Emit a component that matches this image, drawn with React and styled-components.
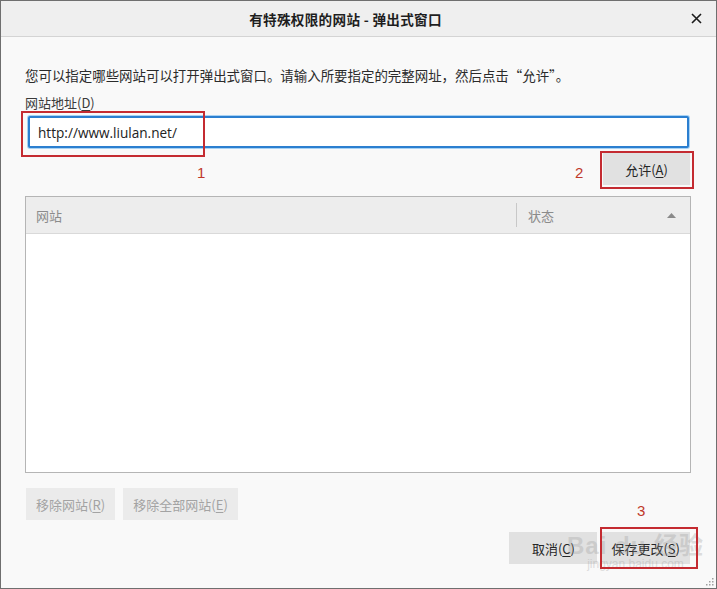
import React from "react"
import styled, { createGlobalStyle } from "styled-components"

const GlobalStyle = createGlobalStyle`
  html, body {
    margin: 0;
    padding: 0;
    background: #ffffff;
  }
  body {
    font-family: "Noto Sans CJK SC", "Open Sans", sans-serif;
  }
`

const Window = styled.div`
  position: relative;
  width: 717px;
  height: 589px;
  box-sizing: border-box;
  border: 1px solid #6f6f6f;
  display: flex;
  flex-direction: column;
  background: #f9f9f9;
  overflow: hidden;
`

const TitleBar = styled.div`
  height: 35px;
  flex-shrink: 0;
  display: flex;
  align-items: center;
  justify-content: center;
  padding-right: 26px;
  background: #efefef;
  border-bottom: 1px solid #d4d4d4;
  position: relative;
`

const Title = styled.div`
  font-size: 13.6px;
  font-weight: 700;
  color: #1e1e1e;
  letter-spacing: 0.3px;
`

const CloseButton = styled.div`
  position: absolute;
  right: 14px;
  top: 12px;
  width: 11px;
  height: 11px;
  display: flex;
`

const Body = styled.div`
  position: relative;
  flex: 1;
  display: flex;
  flex-direction: column;
  padding: 28px 25px 0 24px;
  color: #2b2b2b;
  font-size: 13px;
`

const Description = styled.p`
  margin: 0;
  line-height: 20px;
  font-size: 13.45px;
`

const Label = styled.div`
  margin-top: 8px;
  line-height: 20px;
  color: #3a3a3a;
`

const Key = styled.span`
  text-decoration: underline;
  text-underline-offset: 2px;
`

const UrlInput = styled.input`
  margin: 3px 2px 0 3px;
  height: 32px;
  box-sizing: border-box;
  border: 2px solid #2b7fd0;
  border-radius: 2px;
  box-shadow: 0 0 0 1px #a8d2f4;
  background: #ffffff;
  padding: 0 8px;
  font-family: "Open Sans", "Liberation Sans", sans-serif;
  font-size: 13.6px;
  color: #222;
  outline: none;
`

const ActionRow = styled.div`
  display: flex;
  justify-content: flex-end;
  margin-top: 5px;
  padding-right: 1px;
`

const Button = styled.div`
  display: flex;
  align-items: center;
  justify-content: center;
  height: 32px;
  min-width: ${props => props.width || 88}px;
  box-sizing: border-box;
  padding: 0 10px;
  background: ${props => (props.disabled ? "#ebebeb" : "#e1e1e1")};
  color: ${props => (props.disabled ? "#a3a3a3" : "#262626")};
  font-size: 13px;
`

const Table = styled.div`
  margin-top: 11px;
  height: 277px;
  box-sizing: border-box;
  border: 1px solid #b5b5b5;
  background: #ffffff;
  display: flex;
  flex-direction: column;
`

const TableHeader = styled.div`
  height: 36px;
  flex-shrink: 0;
  display: flex;
  align-items: center;
  background: #ededed;
  border-bottom: 1px solid #d9d9d9;
  color: #8b8b8b;
`

const HeaderCell = styled.div`
  display: flex;
  align-items: center;
  height: 24px;
  flex: ${props => (props.grow ? 1 : "0 0 174px")};
  padding-left: ${props => (props.grow ? 10 : 11)}px;
  border-left: ${props => (props.grow ? "none" : "1px solid #c8c8c8")};
  box-sizing: border-box;
  justify-content: space-between;
  padding-right: 14px;
`

const RemoveRow = styled.div`
  display: flex;
  gap: 8px;
  margin-top: 15px;
  margin-left: 1px;
`

const Footer = styled.div`
  display: flex;
  justify-content: flex-end;
  gap: 4px;
  margin-top: 12px;
  padding-right: 1px;
`

const Marker = styled.div`
  position: absolute;
  border: 2px solid #c42b31;
  box-sizing: border-box;
  left: ${props => props.x}px;
  top: ${props => props.y}px;
  width: ${props => props.w}px;
  height: ${props => props.h}px;
  pointer-events: none;
`

const StepNumber = styled.div`
  position: absolute;
  left: ${props => props.x}px;
  top: ${props => props.y}px;
  color: #c0392b;
  font-family: "Liberation Sans", sans-serif;
  font-size: 15px;
`

const Watermark = styled.div`
  position: absolute;
  left: 566px;
  top: 525px;
  color: #9a9a9a;
  opacity: 0.3;
  pointer-events: none;
  display: flex;
  flex-direction: column;
  align-items: center;
`

const WatermarkTitle = styled.div`
  font-family: "Liberation Sans", "Noto Sans CJK SC", sans-serif;
  font-size: 24px;
  font-weight: 700;
  letter-spacing: 1px;
`

const WatermarkSub = styled.div`
  font-family: "Liberation Sans", sans-serif;
  font-size: 12px;
  margin-top: -4px;
`

const Grip = styled.div`
  position: absolute;
  right: 2px;
  bottom: 2px;
  width: 8px;
  height: 8px;
  display: flex;
`

const App = () => {
  return (
    <>
      <GlobalStyle />
      <Window>
        <TitleBar>
          <Title>有特殊权限的网站 - 弹出式窗口</Title>
          <CloseButton>
            <svg width="11" height="11" viewBox="0 0 11 11">
              <path d="M1 1 L10 10 M10 1 L1 10" stroke="#1a1a1a" strokeWidth="1.6" />
            </svg>
          </CloseButton>
        </TitleBar>
        <Body>
          <Description>
            您可以指定哪些网站可以打开弹出式窗口。请输入所要指定的完整网址，然后点击“允许”。
          </Description>
          <Label>
            网站地址(<Key>D</Key>)
          </Label>
          <UrlInput defaultValue="http://www.liulan.net/" readOnly />
          <ActionRow>
            <Button width={87}>
              允许(<Key>A</Key>)
            </Button>
          </ActionRow>
          <Table>
            <TableHeader>
              <HeaderCell grow>网站</HeaderCell>
              <HeaderCell>
                状态
                <svg width="9" height="5" viewBox="0 0 9 5">
                  <path d="M0 5 L4.5 0 L9 5 Z" fill="#8a8a8a" />
                </svg>
              </HeaderCell>
            </TableHeader>
          </Table>
          <RemoveRow>
            <Button disabled width={89}>
              移除网站(<Key>R</Key>)
            </Button>
            <Button disabled width={115}>
              移除全部网站(<Key>E</Key>)
            </Button>
          </RemoveRow>
          <Footer>
            <Button>
              取消(<Key>C</Key>)
            </Button>
            <Button>
              保存更改(<Key>S</Key>)
            </Button>
          </Footer>
        </Body>

        <Watermark>
          <WatermarkTitle>Bai du 经验</WatermarkTitle>
          <WatermarkSub>jingyan.baidu.com</WatermarkSub>
        </Watermark>

        <Marker x={20} y={110} w={184} h={46} />
        <Marker x={599} y={150} w={94} h={38} />
        <Marker x={599} y={526} w={98} h={42} />
        <StepNumber x={196} y={163}>1</StepNumber>
        <StepNumber x={574} y={163}>2</StepNumber>
        <StepNumber x={636} y={501}>3</StepNumber>

        <Grip>
          <svg width="8" height="8" viewBox="0 0 8 8">
            <rect x="6" y="0" width="1.5" height="1.5" fill="#a0a0a0" />
            <rect x="3" y="3" width="1.5" height="1.5" fill="#a0a0a0" />
            <rect x="6" y="3" width="1.5" height="1.5" fill="#a0a0a0" />
            <rect x="0" y="6" width="1.5" height="1.5" fill="#a0a0a0" />
            <rect x="3" y="6" width="1.5" height="1.5" fill="#a0a0a0" />
            <rect x="6" y="6" width="1.5" height="1.5" fill="#a0a0a0" />
          </svg>
        </Grip>
      </Window>
    </>
  )
}

export default App
